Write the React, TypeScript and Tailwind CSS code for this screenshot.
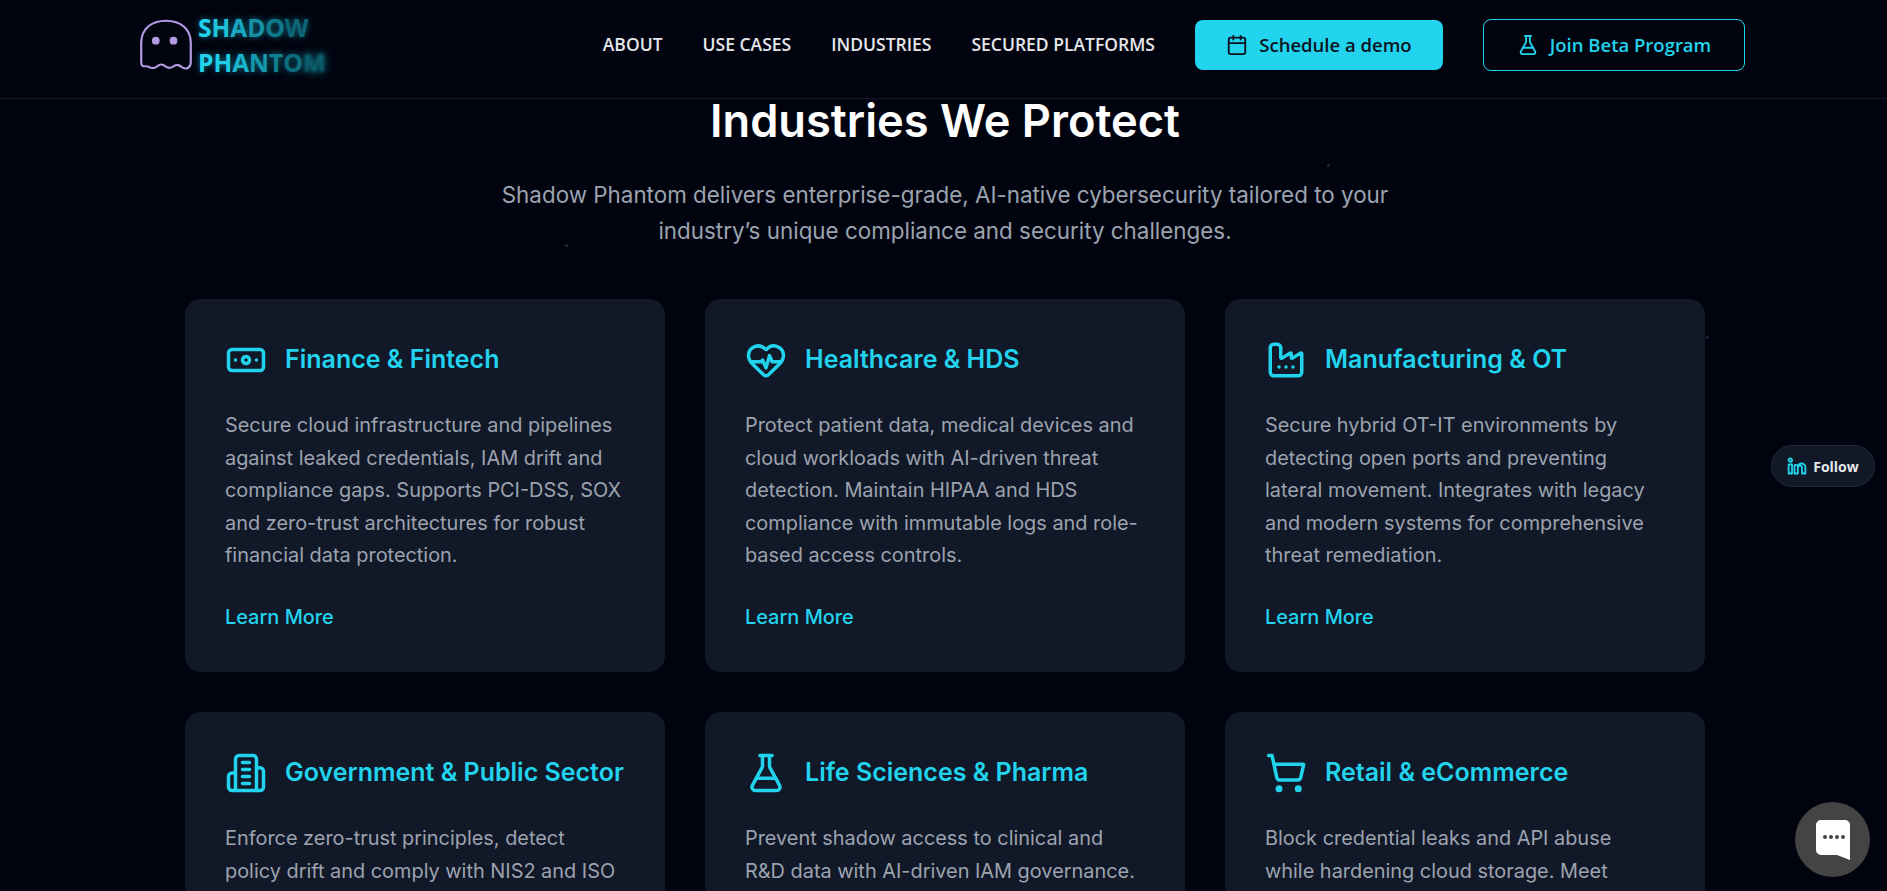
import { Banknote, Calendar, Factory, FlaskConical, HeartPulse, ShoppingCart } from "lucide-react";
import type { ReactNode } from "react";

function GhostLogo() {
  return (
    <svg width="56" height="56" viewBox="0 0 52 52" fill="none" className="text-[#b79ae6]">
      <path
        d="M3 24C3 11 12.5 3.5 26 3.5S49 11 49 24V42C49 47 45 49 41.5 47C38.5 45 36.5 43.5 33.5 45.5C30.5 48 28.5 48 25.5 45.8C22.5 43.5 20.5 43.5 17.5 46C14.5 48 12.5 48 9.5 46C7 45 3 47.5 3 42Z"
        stroke="currentColor"
        strokeWidth="2"
        strokeLinejoin="round"
      />
      <circle cx="16.5" cy="22" r="3.6" fill="currentColor" />
      <circle cx="33" cy="22" r="3.6" fill="currentColor" />
    </svg>
  );
}

const shadowLetters = [
  { c: "S", cls: "text-[#22d3ee] [text-shadow:0_0_6px_#22d3ee88]" },
  { c: "H", cls: "text-[#1fc4dd] [text-shadow:0_0_6px_#22d3ee88]" },
  { c: "A", cls: "text-[#1aa9c0] [text-shadow:0_0_6px_#22d3ee88]" },
  { c: "D", cls: "text-[#1591a6] [text-shadow:0_0_6px_#22d3ee88]" },
  { c: "O", cls: "text-[#107a8c] [text-shadow:0_0_6px_#22d3ee88]" },
  { c: "W", cls: "text-[#0d6777] [text-shadow:0_0_7px_#22d3ee77]" },
];

const phantomLetters = [
  { c: "P", cls: "text-[#22d3ee] [text-shadow:0_0_6px_#22d3ee88]" },
  { c: "H", cls: "text-[#20cde7] [text-shadow:0_0_6px_#22d3ee88]" },
  { c: "A", cls: "text-[#1bb3ca] [text-shadow:0_0_6px_#22d3ee88]" },
  { c: "N", cls: "text-[#1699ae] [text-shadow:0_0_6px_#22d3ee88]" },
  { c: "T", cls: "text-[#118092] [text-shadow:0_0_6px_#22d3ee88]" },
  { c: "O", cls: "text-[#0e6d7d] [text-shadow:0_0_7px_#22d3ee77]" },
  { c: "M", cls: "text-[#0c6472] blur-[1.5px] [text-shadow:0_0_8px_#22d3ee99]" },
];

function Logo() {
  return (
    <div className="flex items-center gap-1">
      <GhostLogo />
      <div className="font-['Open_Sans',sans-serif] text-[24.5px] font-bold leading-[35px]">
        <div>
          {shadowLetters.map((l, i) => (
            <span key={i} className={l.cls}>{l.c}</span>
          ))}
        </div>
        <div>
          {phantomLetters.map((l, i) => (
            <span key={i} className={l.cls}>{l.c}</span>
          ))}
        </div>
      </div>
    </div>
  );
}

function Header() {
  return (
    <header className="flex h-[99px] shrink-0 items-center border-b border-[#111827] pb-[9px] pl-[138px] pr-[142px] font-['Open_Sans',sans-serif]">
      <Logo />
      <nav className="ml-auto flex items-center gap-10 text-[17.5px] font-semibold text-[#e5e7eb]">
        <a>ABOUT</a>
        <a>USE CASES</a>
        <a>INDUSTRIES</a>
        <a>SECURED PLATFORMS</a>
      </nav>
      <button className="ml-10 flex h-[50px] w-[248px] items-center justify-center gap-[11px] rounded-lg bg-[#22d3ee] text-[18.5px] font-semibold text-[#0b1320]">
        <Calendar size={22} strokeWidth={2} />
        Schedule a demo
      </button>
      <button className="ml-10 flex h-[52px] w-[262px] items-center justify-center gap-[11px] rounded-lg border border-[#22d3ee] text-[18.5px] font-semibold text-[#22d3ee]">
        <FlaskConical size={22} strokeWidth={2} />
        Join Beta Program
      </button>
    </header>
  );
}

function GovIcon() {
  return (
    <svg width="42" height="42" viewBox="0 0 24 24" fill="none" stroke="currentColor" strokeWidth="2" strokeLinecap="round" strokeLinejoin="round">
      <path d="M6 22V4a2 2 0 0 1 2-2h8a2 2 0 0 1 2 2v18Z" />
      <path d="M6 12H4a2 2 0 0 0-2 2v6a2 2 0 0 0 2 2h2" />
      <path d="M18 9h2a2 2 0 0 1 2 2v9a2 2 0 0 1-2 2h-2" />
      <path d="M10 6h4" />
      <path d="M10 10h4" />
      <path d="M10 14h4" />
      <path d="M10 18h4" />
    </svg>
  );
}

const cards: { title: string; icon: ReactNode; text: string }[] = [
  {
    title: "Finance & Fintech",
    icon: <Banknote size={42} />,
    text: "Secure cloud infrastructure and pipelines against leaked credentials, IAM drift and compliance gaps. Supports PCI-DSS, SOX and zero-trust architectures for robust financial data protection.",
  },
  {
    title: "Healthcare & HDS",
    icon: <HeartPulse size={42} />,
    text: "Protect patient data, medical devices and cloud workloads with AI-driven threat detection. Maintain HIPAA and HDS compliance with immutable logs and role-based access controls.",
  },
  {
    title: "Manufacturing & OT",
    icon: <Factory size={42} />,
    text: "Secure hybrid OT-IT environments by detecting open ports and preventing lateral movement. Integrates with legacy and modern systems for comprehensive threat remediation.",
  },
  {
    title: "Government & Public Sector",
    icon: <GovIcon />,
    text: "Enforce zero-trust principles, detect policy drift and comply with NIS2 and ISO 27001 standards across sovereign and public cloud environments with full audit trails.",
  },
  {
    title: "Life Sciences & Pharma",
    icon: <FlaskConical size={42} />,
    text: "Prevent shadow access to clinical and R&D data with AI-driven IAM governance. Keep research pipelines compliant and protect intellectual property at every stage.",
  },
  {
    title: "Retail & eCommerce",
    icon: <ShoppingCart size={42} />,
    text: "Block credential leaks and API abuse while hardening cloud storage. Meet compliance requirements and protect customer data across every channel and storefront.",
  },
];

function IndustryCard({ title, icon, text }: { title: string; icon: ReactNode; text: string }) {
  return (
    <div className="h-[373px] rounded-2xl bg-[#111827] px-10 pt-[40px]">
      <div className="flex h-[42px] items-center gap-[18px] text-[#22d3ee]">
        {icon}
        <h3 className="text-[25px] font-semibold">{title}</h3>
      </div>
      <p className="mt-[28px] text-[19.9px] leading-[32.5px] text-[#9ca3af]">{text}</p>
      <a className="mt-[31px] block text-[19.9px] font-medium leading-[28px] text-[#22d3ee]">Learn More</a>
    </div>
  );
}

export default function App() {
  return (
    <div className="relative flex h-screen flex-col overflow-hidden bg-[#01040f] font-['Inter',sans-serif]">
      <Header />

      {/* particles */}
      <span className="absolute left-[1327px] top-[164px] h-[3px] w-[3px] rounded-full bg-[#1f2937]" />
      <span className="absolute left-[565px] top-[244px] h-[3px] w-[3px] rounded-full bg-[#1f2937]" />
      <span className="absolute left-[1706px] top-[336px] h-[3px] w-[3px] rounded-full bg-[#1f2937]" />

      <main className="pl-[185px]">
        <div className="w-[1520px]">
          <h2 className="text-center text-[45.2px] font-semibold leading-[44px] text-white">Industries We Protect</h2>
          <p className="mx-auto mt-[34px] max-w-[920px] text-center text-[22.4px] leading-[36px] text-[#9ca3af]">
            Shadow Phantom delivers enterprise-grade, AI-native cybersecurity tailored to your industry’s unique compliance and security challenges.
          </p>
          <div className="mt-[50px] grid grid-cols-3 gap-x-10 gap-y-[40px]">
            {cards.map((c) => (
              <IndustryCard key={c.title} {...c} />
            ))}
          </div>
        </div>
      </main>

      {/* linkedin follow pill */}
      <div className="absolute left-[1771px] top-[445px] flex h-[42px] w-[104px] items-center justify-center gap-[6px] rounded-full border border-[#1f2937] bg-[#111827] font-['Open_Sans',sans-serif] text-[14px] font-bold text-[#e5e7eb]">
        <svg width="20" height="20" viewBox="0 0 24 24" fill="none" stroke="#22d3ee" strokeWidth="2.2" strokeLinecap="round" strokeLinejoin="round">
          <path d="M9 21V11h4v2a4.5 4.5 0 0 1 9 1v7h-4v-7a1.5 1.5 0 0 0-5 0v7Z" />
          <rect x="2" y="10" width="4" height="11" />
          <circle cx="4" cy="5" r="2" />
        </svg>
        Follow
      </div>

      {/* chat widget */}
      <div className="absolute left-[1795px] top-[802px] flex h-[75px] w-[75px] items-center justify-center rounded-full bg-[#444444]">
        <svg width="36" height="42" viewBox="0 0 36 42" className="mt-[1px]">
          <path d="M6 1H30A5 5 0 0 1 35 6V41L22 36H6A5 5 0 0 1 1 31V6A5 5 0 0 1 6 1Z" fill="white" />
          <circle cx="10" cy="18" r="2" fill="#444444" />
          <circle cx="16" cy="18" r="2" fill="#444444" />
          <circle cx="22" cy="18" r="2" fill="#444444" />
          <circle cx="28" cy="18" r="2" fill="#444444" />
        </svg>
      </div>
    </div>
  );
}
